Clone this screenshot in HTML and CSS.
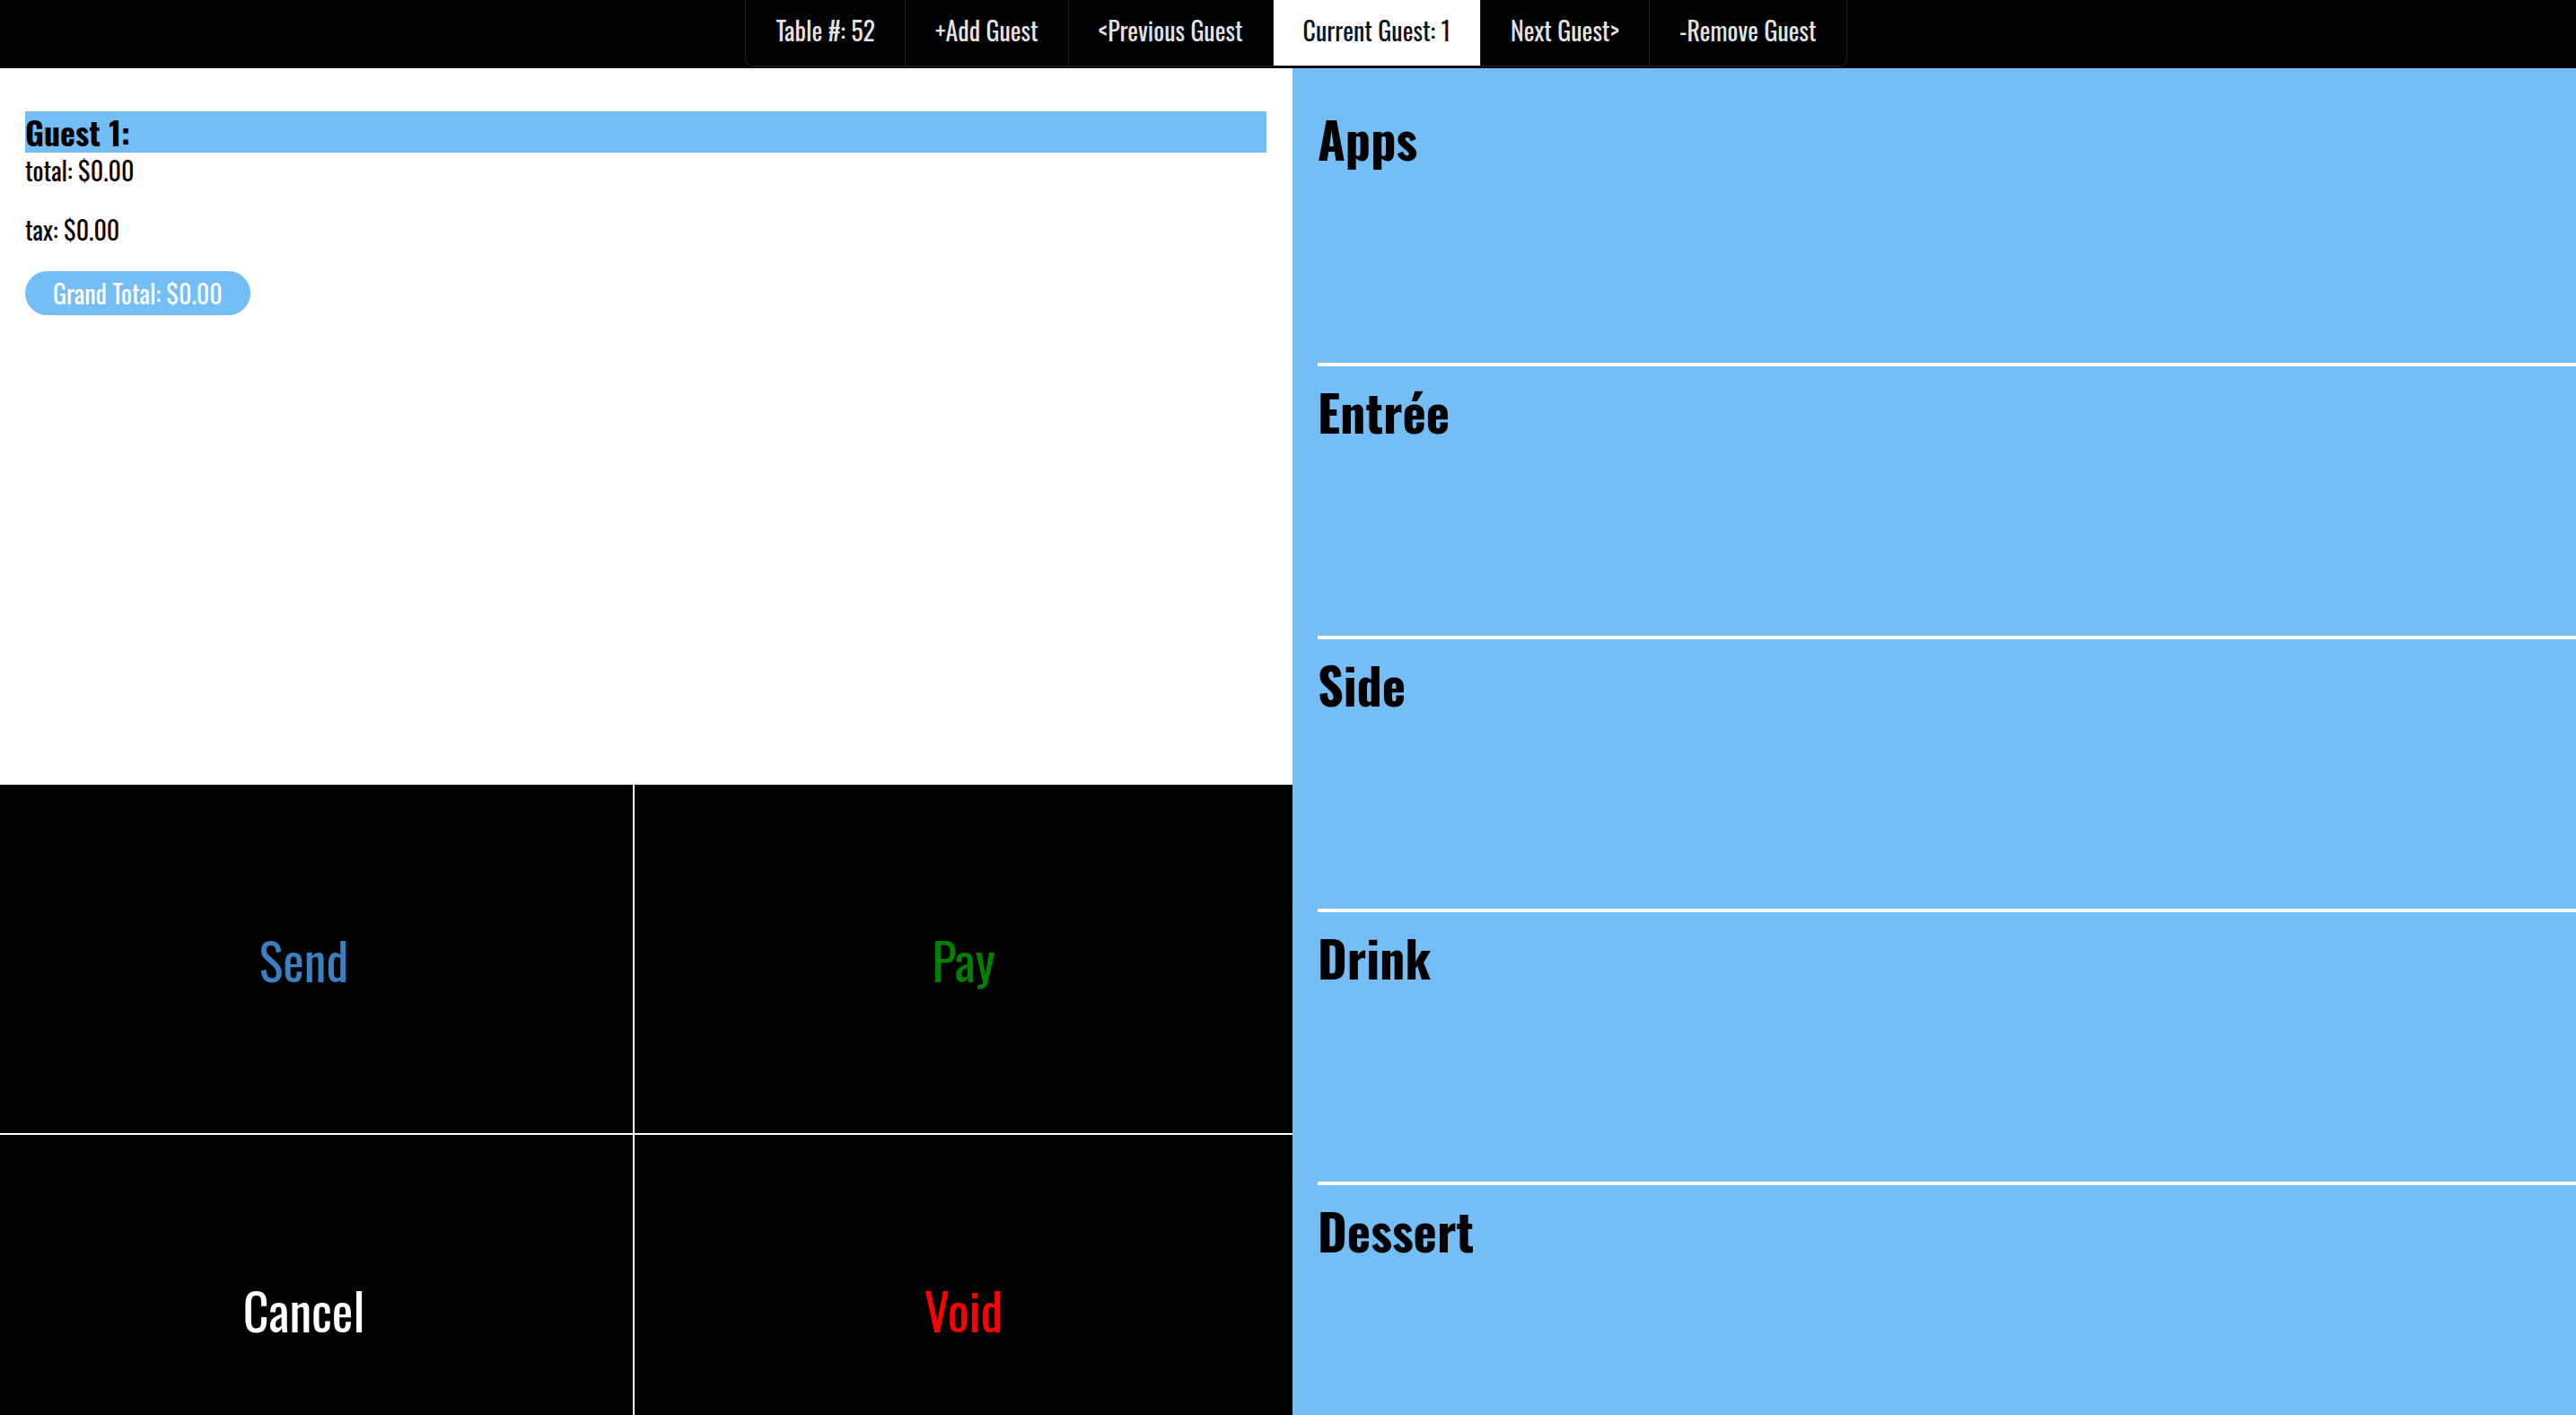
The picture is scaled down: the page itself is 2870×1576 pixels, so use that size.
FILE: index.html
```html
<!DOCTYPE html>
<html lang="en">
<head>
<meta charset="utf-8">
<title>Table 52 – Order</title>
<link rel="stylesheet" href="styles.css">
</head>
<body>
<nav class="topbar">
  <ul class="tabs">
    <li class="tab">Table #: 52</li>
    <li class="tab">+Add Guest</li>
    <li class="tab">&lt;Previous Guest</li>
    <li class="tab tab-active">Current Guest: 1</li>
    <li class="tab">Next Guest&gt;</li>
    <li class="tab">-Remove Guest</li>
  </ul>
</nav>
<main class="layout">
  <section class="order-side">
    <div class="order">
      <h2 class="guest-title">Guest 1:</h2>
      <p class="line">total: $0.00</p>
      <p class="line">tax: $0.00</p>
      <span class="grand">Grand Total: $0.00</span>
    </div>
    <div class="actions">
      <button class="action send">Send</button>
      <button class="action pay">Pay</button>
      <button class="action cancel">Cancel</button>
      <button class="action void">Void</button>
    </div>
  </section>
  <section class="menu">
    <div class="cat"><h1 class="cat-title">Apps</h1></div>
    <div class="cat"><h1 class="cat-title">Entrée</h1></div>
    <div class="cat"><h1 class="cat-title">Side</h1></div>
    <div class="cat"><h1 class="cat-title">Drink</h1></div>
    <div class="cat"><h1 class="cat-title">Dessert</h1></div>
  </section>
</main>
</body>
</html>
```
FILE: styles.css
```css
* { box-sizing: border-box; }
html, body { margin: 0; padding: 0; }
body {
  font-family: "Oswald", "Roboto Condensed", sans-serif;
  font-size: 28px;
  background: #fff;
  color: #000;
  height: 1576px;
  overflow: hidden;
}

/* top navigation */
.topbar {
  background: #000;
  height: 76px;
  display: flex;
  justify-content: center;
  padding-left: 18px;
}
.tabs {
  list-style: none;
  margin: 0;
  padding: 0;
  display: flex;
  height: 74px;
  border: 1px solid #1f1f1f;
  border-top: 0;
  border-radius: 0 0 8px 8px;
}
.tab {
  height: 73px;
  padding: 0 33px 6px;
  line-height: 67px;
  font-size: 28px;
  color: #e4e4e4;
  border-left: 1px solid #1f1f1f;
  white-space: nowrap;
}
.tab:first-child { border-left: 0; }
.tab-active {
  background: #fff;
  color: #111;
}

/* main layout */
.layout {
  display: grid;
  grid-template-columns: 1440px 1fr;
}

/* left: order */
.order {
  height: 798px;
  padding: 48px 29px 0 28px;
}
.guest-title {
  margin: 0;
  background: #73bef6;
  height: 46px;
  line-height: 46px;
  font-size: 36px;
  font-weight: 700;
}
.line {
  margin: 0 0 27px;
  font-size: 28px;
  line-height: 39px;
}
.grand {
  display: inline-block;
  height: 49px;
  line-height: 49px;
  padding: 0 31px;
  border-radius: 25px;
  background: #73bef6;
  color: #fff;
  font-size: 28px;
}

.actions {
  display: grid;
  grid-template-columns: 1fr 1fr;
  grid-auto-rows: 388px;
  gap: 2px;
  background: #fff;
  margin-left: -28px;
}
.action {
  background: #000;
  border: 0;
  padding: 0;
  margin: 0;
  font-family: inherit;
  font-size: 56px;
  display: flex;
  align-items: center;
  justify-content: center;
}
.send { color: #3a7fc1; }
.pay { color: #008000; }
.cancel { color: #fff; }
.void { color: #ff0000; }

/* right: menu categories */
.menu {
  background: #73bef6;
  padding: 24px 0 0 28px;
}
.cat {
  height: 304px;
  border-top: 4px solid #fff;
  padding-top: 10px;
}
.cat:first-child { border-top-color: transparent; }
.cat-title {
  margin: 0;
  font-size: 56px;
  line-height: 80px;
  font-weight: 700;
}
```
